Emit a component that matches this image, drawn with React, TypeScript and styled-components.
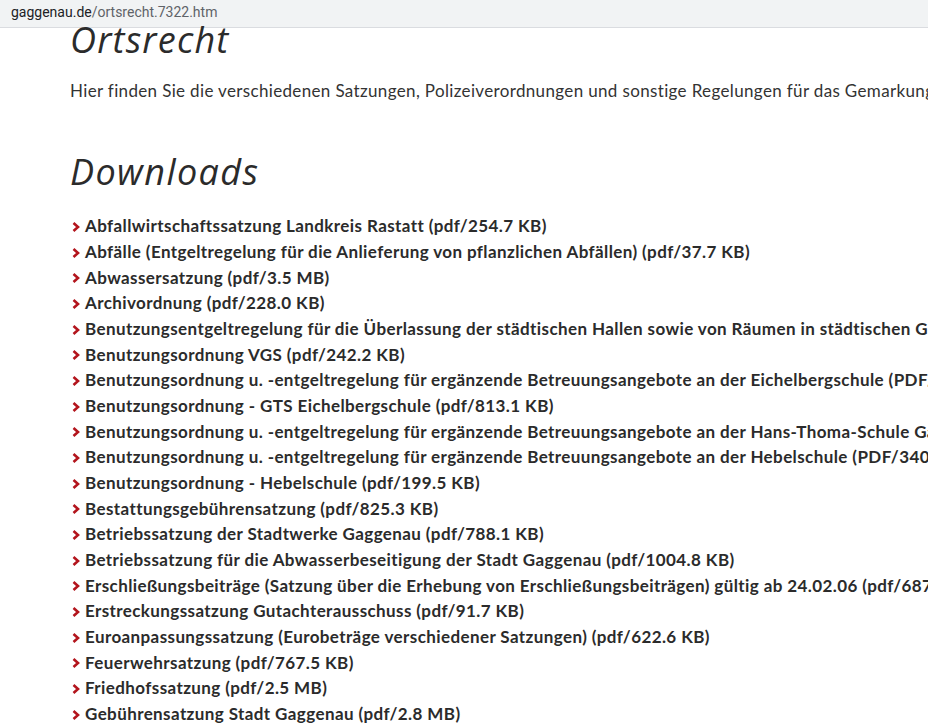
import React from "react";
import styled, { createGlobalStyle } from "styled-components";

const GlobalStyle = createGlobalStyle`
  html, body {
    margin: 0;
    padding: 0;
    background: #fff;
    overflow: hidden;
  }
  body {
    font-family: Lato, "Open Sans", sans-serif;
    color: #333;
  }
`;

const AddressBar = styled.div`
  height: 28px;
  box-sizing: border-box;
  background: #f1f3f4;
  border-bottom: 1px solid #dadce0;
  display: flex;
  align-items: center;
  padding: 0 0 3px 11px;
  font-family: Roboto, "Liberation Sans", sans-serif;
  font-size: 14px;
`;

const UrlPart = styled.span<{ $muted?: boolean }>`
  color: ${(p) => (p.$muted ? "#5f6368" : "#202124")};
`;

const Main = styled.main`
  padding-left: 70px;
  white-space: nowrap;
`;

const Title = styled.h1`
  margin: 0;
  font-family: "Open Sans", Lato, sans-serif;
  font-weight: 400;
  font-style: italic;
  font-size: 36px;
  line-height: 24px;
  letter-spacing: 1.2px;
  color: #2b2b2b;
`;

const Intro = styled.p`
  margin: 26px 0 0;
  font-size: 17px;
  line-height: 26px;
  letter-spacing: 0.35px;
  color: #333;
`;

const Subtitle = styled.h2`
  margin: 56px 0 0;
  font-family: "Open Sans", Lato, sans-serif;
  font-weight: 400;
  font-style: italic;
  font-size: 36px;
  line-height: 24px;
  letter-spacing: 1.4px;
  color: #2b2b2b;
`;

const DownloadList = styled.ul`
  list-style: none;
  margin: 29px 0 0;
  padding: 0;
`;

const Item = styled.li`
  display: flex;
  align-items: center;
  gap: 5px;
  height: 25.68px;
  font-size: 17px;
  font-weight: 700;
  letter-spacing: 0.4px;
  color: #2b2b2b;
`;

const Chevron = styled.svg`
  width: 8px;
  height: 10px;
  flex: none;
  margin-left: 2px;
  margin-top: 2px;
`;

const downloads = [
  "Abfallwirtschaftssatzung Landkreis Rastatt (pdf/254.7 KB)",
  "Abfälle (Entgeltregelung für die Anlieferung von pflanzlichen Abfällen) (pdf/37.7 KB)",
  "Abwassersatzung (pdf/3.5 MB)",
  "Archivordnung (pdf/228.0 KB)",
  "Benutzungsentgeltregelung für die Überlassung der städtischen Hallen sowie von Räumen in städtischen Gebäuden (pdf/312.4 KB)",
  "Benutzungsordnung VGS (pdf/242.2 KB)",
  "Benutzungsordnung u. -entgeltregelung für ergänzende Betreuungsangebote an der Eichelbergschule (PDF/359.1 KB)",
  "Benutzungsordnung - GTS Eichelbergschule (pdf/813.1 KB)",
  "Benutzungsordnung u. -entgeltregelung für ergänzende Betreuungsangebote an der Hans-Thoma-Schule Gaggenau (PDF/341.2 KB)",
  "Benutzungsordnung u. -entgeltregelung für ergänzende Betreuungsangebote an der Hebelschule (PDF/340.9 KB)",
  "Benutzungsordnung - Hebelschule (pdf/199.5 KB)",
  "Bestattungsgebührensatzung (pdf/825.3 KB)",
  "Betriebssatzung der Stadtwerke Gaggenau (pdf/788.1 KB)",
  "Betriebssatzung für die Abwasserbeseitigung der Stadt Gaggenau (pdf/1004.8 KB)",
  "Erschließungsbeiträge (Satzung über die Erhebung von Erschließungsbeiträgen) gültig ab 24.02.06 (pdf/687.3 KB)",
  "Erstreckungssatzung Gutachterausschuss (pdf/91.7 KB)",
  "Euroanpassungssatzung (Eurobeträge verschiedener Satzungen) (pdf/622.6 KB)",
  "Feuerwehrsatzung (pdf/767.5 KB)",
  "Friedhofssatzung (pdf/2.5 MB)",
  "Gebührensatzung Stadt Gaggenau (pdf/2.8 MB)",
];

function App() {
  return (
    <>
      <GlobalStyle />
      <AddressBar>
        <UrlPart>gaggenau.de</UrlPart>
        <UrlPart $muted>/ortsrecht.7322.htm</UrlPart>
      </AddressBar>
      <Main>
        <Title>Ortsrecht</Title>
        <Intro>
          Hier finden Sie die verschiedenen Satzungen, Polizeiverordnungen und sonstige Regelungen für das Gemarkungsgebiet der Stadt Gaggenau.
        </Intro>
        <Subtitle>Downloads</Subtitle>
        <DownloadList>
          {downloads.map((d) => (
            <Item key={d}>
              <Chevron viewBox="0 0 8 10">
                <path d="M1.5 1 L6 5 L1.5 9" fill="none" stroke="#b3151d" strokeWidth="2.6" />
              </Chevron>
              <span>{d}</span>
            </Item>
          ))}
        </DownloadList>
      </Main>
    </>
  );
}

export default App;
